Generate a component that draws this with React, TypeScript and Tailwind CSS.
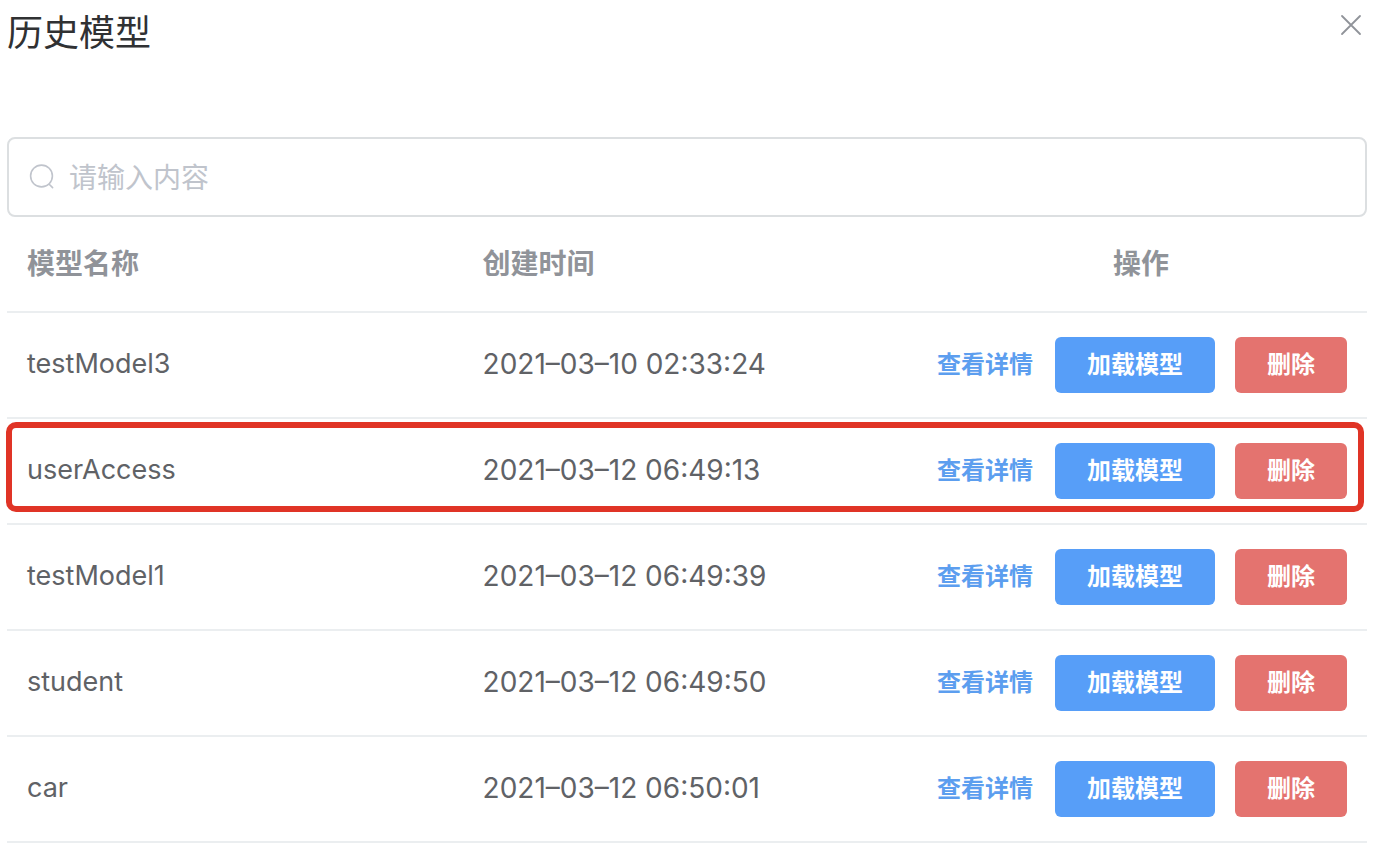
type Model = { name: string; createdAt: string; highlighted?: boolean };

const models: Model[] = [
  { name: 'testModel3', createdAt: '2021–03–10 02:33:24' },
  { name: 'userAccess', createdAt: '2021–03–12 06:49:13', highlighted: true },
  { name: 'testModel1', createdAt: '2021–03–12 06:49:39' },
  { name: 'student', createdAt: '2021–03–12 06:49:50' },
  { name: 'car', createdAt: '2021–03–12 06:50:01' },
];

function ModelRow({ model }: { model: Model }) {
  return (
    <tr className="relative">
      <td className="h-[106px] border-b-2 border-[#ebeef0] px-5 pb-0.5 text-[27px]">
        {model.name}
        {model.highlighted && (
          <span
            aria-hidden="true"
            className="pointer-events-none absolute -left-px right-[3px] top-[3px] h-[90px] rounded-[10px] border-6 border-[#e03426]"
          />
        )}
      </td>
      <td className="border-b-2 border-[#ebeef0] px-5 pb-0.5">{model.createdAt}</td>
      <td className="border-b-2 border-[#ebeef0] px-5">
        <div className="flex items-center justify-end gap-5 text-2xl font-bold">
          <button type="button" className="whitespace-nowrap px-0.5 text-[#5c9eef]">
            查看详情
          </button>
          <button type="button" className="h-14 whitespace-nowrap rounded-md bg-[#579ef8] px-8 text-white">
            加载模型
          </button>
          <button type="button" className="h-14 whitespace-nowrap rounded-md bg-[#e4736f] px-8 text-white">
            删除
          </button>
        </div>
      </td>
    </tr>
  );
}

export default function App() {
  return (
    <main className="min-h-screen bg-white pl-[7px] pr-[17px] font-[Inter,'Noto_Sans_CJK_SC',sans-serif] text-[28px] text-[#606266]">
      <header className="flex items-start justify-between pb-[77px] pt-1.5">
        <h1 className="text-4xl leading-[54px] text-[#303133]">历史模型</h1>
        <button type="button" aria-label="关闭" className="p-1 text-[#909399]">
          <svg width="24" height="24" viewBox="0 0 24 24" fill="none" stroke="currentColor" strokeWidth="1.8" strokeLinecap="round" className="mt-1">
            <path d="M3 2 21 20M21 2 3 20" />
          </svg>
        </button>
      </header>

      <label className="flex h-20 items-center gap-3.5 rounded-lg border-2 border-[#dcdfe1] px-5">
        <svg width="26" height="26" viewBox="0 0 26 26" fill="none" stroke="#c0c4cc" strokeWidth="1.6" strokeLinecap="round" className="shrink-0">
          <circle cx="12.5" cy="12" r="10.9" />
          <path d="m20.2 20.2 3.4 3.4" />
        </svg>
        <input
          type="text"
          aria-label="搜索模型"
          placeholder="请输入内容"
          className="min-w-0 flex-1 bg-transparent pt-0.5 outline-none placeholder:text-[#c0c4cc]"
        />
      </label>

      <table className="w-full table-fixed border-separate border-spacing-0 text-left">
        <thead>
          <tr className="text-[#909399]">
            <th className="h-24 w-[33.5%] border-b-2 border-[#ebeef0] px-5 font-bold">模型名称</th>
            <th className="border-b-2 border-[#ebeef0] px-5 font-bold">创建时间</th>
            <th className="w-[33.25%] border-b-2 border-[#ebeef0] px-5 text-center font-bold">操作</th>
          </tr>
        </thead>
        <tbody>
          {models.map((model) => (
            <ModelRow key={model.name} model={model} />
          ))}
        </tbody>
      </table>
    </main>
  );
}
